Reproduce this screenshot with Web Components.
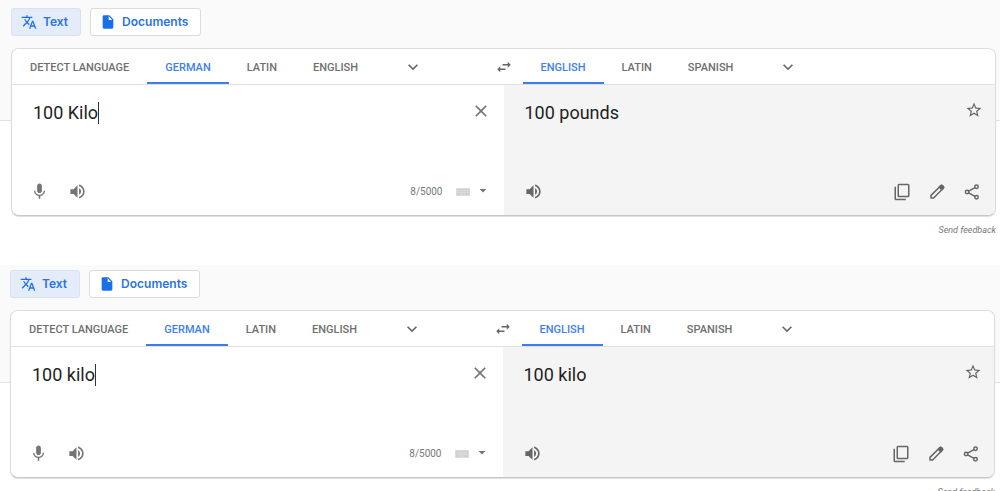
<!DOCTYPE html>
<html lang="en">
<head>
<meta charset="utf-8">
<title>Translate</title>
<style>
body{margin:0;background:#fff;font-family:Roboto,"Liberation Sans",sans-serif;color:#757575;overflow:hidden}
</style>
</head>
<body>
<translate-view source="100 Kilo" result="100 pounds"></translate-view>
<translate-view source="100 kilo" result="100 kilo" class="compact"></translate-view>
<script>
const ICONS = {
  translate:'<path d="M12.87 15.07l-2.54-2.51.03-.03c1.74-1.94 2.98-4.17 3.71-6.53H17V4h-7V2H8v2H1v1.99h11.17C11.5 7.92 10.44 9.75 9 11.35 8.07 10.32 7.3 9.19 6.69 8h-2c.73 1.63 1.73 3.17 2.98 4.56l-5.09 5.02L4 19l5-5 3.11 3.11.76-2.04zM18.5 10h-2L12 22h2l1.12-3h4.75L21 22h2l-4.5-12zm-2.62 7l1.62-4.33L19.12 17h-3.24z"/>',
  file:'<path fill-rule="evenodd" d="M6 2c-1.100 0-2 .9-2 2v16c0 1.100.9 2 2 2h12c1.100 0 2-.9 2-2V8l-6-6H6zm7 7V3.500L18.500 9H13z"/>',
  expand:'<path d="M16.590 8.590L12 13.170 7.410 8.590 6 10l6 6 6-6z"/>',
  swap:'<path d="M6.990 11L3 15l3.990 4v-3H14v-2H6.990v-3zM21 9l-3.990-4v3H10v2h7.010v3L21 9z"/>',
  close:'<path d="M19 6.410L17.590 5 12 10.590 6.410 5 5 6.410 10.590 12 5 17.590 6.410 19 12 13.410 17.590 19 19 17.590 13.410 12z"/>',
  mic:'<path d="M12 14c1.660 0 3-1.340 3-3V5c0-1.660-1.340-3-3-3S9 3.340 9 5v6c0 1.660 1.340 3 3 3zm5.300-3c0 3-2.540 5.100-5.300 5.100S6.700 14 6.700 11H5c0 3.410 2.720 6.230 6 6.720V21h2v-3.280c3.280-.48 6-3.300 6-6.720h-1.700z"/>',
  volume:'<path d="M3 9v6h4l5 5V4L7 9H3zm13.500 3c0-1.770-1.020-3.290-2.500-4.030v8.050c1.480-.73 2.500-2.250 2.500-4.020zM14 3.230v2.060c2.890.86 5 3.540 5 6.710s-2.110 5.850-5 6.710v2.060c4.010-.91 7-4.490 7-8.770s-2.990-7.860-7-8.770z"/>',
  star:'<path d="M22 9.240l-7.190-.62L12 2 9.190 8.630 2 9.240l5.460 4.730L5.820 21 12 17.270 18.180 21l-1.630-7.030L22 9.240zM12 15.400l-3.760 2.270 1-4.280-3.320-2.880 4.380-.38L12 6.100l1.710 4.040 4.380.38-3.320 2.880 1 4.280L12 15.400z"/>',
  copy:'<g fill="none" stroke="currentColor" stroke-width="2"><rect x="7" y="2" width="14" height="16" rx="1"/><path d="M3 5v16q0 1 1 1h13"/></g>',
  edit:'<g fill="none" stroke="currentColor" stroke-width="2" stroke-linejoin="round"><path d="M4 20v-3.500L17.300 3.300q.9-.7 1.800 0l1.500 1.600q.8.900 0 1.800L7.500 20z"/><path d="M15 5.600L18.400 9l2-2.200q.9-1-.1-2l-1.300-1.300q-1-.8-1.900 0z" fill="currentColor"/></g>',
  share:'<g fill="none" stroke="currentColor" stroke-width="2"><circle cx="18" cy="5" r="2.300"/><circle cx="5.500" cy="12" r="2.300"/><circle cx="18" cy="19" r="2.300"/><path d="M7.500 10.900L16 6.100M7.500 13.100L16 17.900"/></g>',
  keyboard:'<path fill="#cfcfcf" d="M3 7h18v10H3z"/><path stroke="#e4e4e4" stroke-width="1.500" fill="none" stroke-dasharray="1.500 1" d="M5 10h14M5 12.500h14M8 15h8"/>',
  drop:'<path d="M7.500 8h9L12 12.500z"/>'
};

class UiIcon extends HTMLElement {
  connectedCallback(){
    this.attachShadow({mode:'open'}).innerHTML = `
      <style>:host{display:block;width:var(--icon-size,18px);height:var(--icon-size,18px)}svg{display:block;width:100%;height:100%;fill:currentColor}</style>
      <svg viewBox="0 0 24 24" aria-hidden="true">${ICONS[this.getAttribute('name')]}</svg>`;
  }
}
customElements.define('ui-icon', UiIcon);

class IconButton extends HTMLElement {
  connectedCallback(){
    this.attachShadow({mode:'open'}).innerHTML = `
      <style>
        :host{display:block}
        button{display:grid;place-items:center;width:100%;padding:0;border:0;background:none;color:inherit;cursor:pointer}
      </style>
      <button type="button" aria-label="${this.getAttribute('label')}"><ui-icon name="${this.getAttribute('icon')}"></ui-icon></button>`;
  }
}
customElements.define('icon-button', IconButton);

class ModeButton extends HTMLElement {
  connectedCallback(){
    this.attachShadow({mode:'open'}).innerHTML = `
      <style>
        :host{display:block;--icon-size:16px}
        button{box-sizing:border-box;display:flex;align-items:center;gap:6px;height:28px;padding:0 12px 0 9px;border:1px solid #dadce0;border-radius:3px;background:#fff;color:#2a73e0;font:600 12px/16px Inter,Roboto,sans-serif;cursor:pointer}
        :host([active]) button{background:#e4ecfa;border-color:#d8e2f3}
        ui-icon{color:#1a6fe8}
      </style>
      <button type="button"><ui-icon name="${this.getAttribute('icon')}"></ui-icon><slot></slot></button>`;
  }
}
customElements.define('mode-button', ModeButton);

class LanguageTab extends HTMLElement {
  connectedCallback(){
    this.attachShadow({mode:'open'}).innerHTML = `
      <style>
        :host{display:block}
        button{box-sizing:border-box;height:100%;padding:4px 18px 0;border:0;border-bottom:2px solid transparent;background:none;color:#6f6f6f;font:500 11px/16px Roboto,sans-serif;white-space:nowrap;cursor:pointer}
        :host([active]) button{color:#4080ee;border-color:#3b7de9}
      </style>
      <button type="button"><slot></slot></button>`;
  }
}
customElements.define('language-tab', LanguageTab);

class LanguageBar extends HTMLElement {
  connectedCallback(){
    this.attachShadow({mode:'open'}).innerHTML = `
      <style>
        :host{display:grid;grid-template-columns:1fr 38px 1fr;height:35px;border-bottom:1px solid #e0e0e0;background:#fff;border-radius:7px 7px 0 0}
        nav{display:flex;align-items:stretch;min-width:0}
        icon-button{align-self:center;color:#666}
        nav icon-button{width:74px;--icon-size:20px}
      </style>
      <nav aria-label="Source language">
        <language-tab>DETECT LANGUAGE</language-tab><language-tab active>GERMAN</language-tab><language-tab>LATIN</language-tab><language-tab>ENGLISH</language-tab>
        <icon-button icon="expand" label="More source languages"></icon-button>
      </nav>
      <icon-button icon="swap" label="Swap languages"></icon-button>
      <nav aria-label="Target language">
        <language-tab active>ENGLISH</language-tab><language-tab>LATIN</language-tab><language-tab>SPANISH</language-tab>
        <icon-button icon="expand" label="More target languages"></icon-button>
      </nav>`;
  }
}
customElements.define('language-bar', LanguageBar);

class SourcePane extends HTMLElement {
  connectedCallback(){
    this.attachShadow({mode:'open'}).innerHTML = `
      <style>
        :host{display:flex;flex-direction:column;justify-content:space-between;min-width:0}
        .row{display:flex;align-items:center}
        .entry{padding:16px 13px 0 21px;height:24px}
        textarea{field-sizing:content;resize:none;overflow:hidden;border:0;outline:0;margin:0;padding:0;height:24px;background:none;color:#222;font:400 18px/24px Roboto,sans-serif;white-space:pre}
        .caret{width:1px;height:22px;background:#333}
        .entry icon-button{margin-left:auto;align-self:flex-start;--icon-size:20px}
        .tools{padding:0 12px 14px 18px;gap:19px}
        .tools > icon-button{--icon-size:19px}
        .count{margin-left:auto;font-size:10px;line-height:16px;color:#777}
        .keys{display:flex;margin-left:-8px;gap:2px}
      </style>
      <div class="row entry"><textarea rows="1" aria-label="Source text" spellcheck="false">${this.getAttribute('text')}</textarea><span class="caret"></span><icon-button icon="close" label="Clear source text"></icon-button></div>
      <div class="row tools">
        <icon-button icon="mic" label="Translate by voice"></icon-button>
        <icon-button icon="volume" label="Listen"></icon-button>
        <span class="count">8/5000</span>
        <span class="keys"><icon-button icon="keyboard" label="Keyboard"></icon-button><icon-button icon="drop" label="Input tools"></icon-button></span>
      </div>`;
  }
}
customElements.define('source-pane', SourcePane);

class ResultPane extends HTMLElement {
  connectedCallback(){
    this.attachShadow({mode:'open'}).innerHTML = `
      <style>
        :host{display:flex;flex-direction:column;justify-content:space-between;min-width:0;background:#f4f4f4;border-radius:0 0 7px 0}
        .row{display:flex;align-items:center;justify-content:space-between}
        .entry{padding:16px 12px 0 21px;height:24px;color:#222;font-size:18px;line-height:24px}
        .entry icon-button{align-self:flex-start}
        .tools{padding:0 14px 14px 20px}
        .tools > icon-button{--icon-size:19px}
        .actions{display:flex;gap:17px}
        icon-button{color:#666}
      </style>
      <div class="row entry"><span><slot></slot></span><icon-button icon="star" label="Save translation"></icon-button></div>
      <div class="row tools">
        <icon-button icon="volume" label="Listen to translation"></icon-button>
        <span class="actions"><icon-button icon="copy" label="Copy"></icon-button><icon-button icon="edit" label="Suggest an edit"></icon-button><icon-button icon="share" label="Share"></icon-button></span>
      </div>`;
  }
}
customElements.define('result-pane', ResultPane);

class TranslateView extends HTMLElement {
  connectedCallback(){
    this.attachShadow({mode:'open'}).innerHTML = `
      <style>
        :host{display:block;padding:8px 4px 29px 11px;background:linear-gradient(#e2e2e2,#e2e2e2) 0 120px/100% 1px no-repeat,linear-gradient(#fafafa,#fafafa) 0 0/100% 120px no-repeat}
        :host(.compact){padding:5px 5px 0 10px;background-position:0 117px,0 -3px}
        .modes{display:flex;gap:9px;margin-bottom:12px}
        .card{border:1px solid #dcdcdc;border-bottom-color:#c8c8c8;border-radius:8px;background:#fff;box-shadow:0 1px 1px #0002}
        .panes{display:grid;grid-template-columns:1fr 1fr;min-height:130px}
        .feedback{margin:8px 0 0;text-align:right;font-size:9px;line-height:12px;font-style:italic}
        a{color:#777;text-decoration:none}
      </style>
      <div class="modes"><mode-button icon="translate" active>Text</mode-button><mode-button icon="file">Documents</mode-button></div>
      <div class="card">
        <language-bar></language-bar>
        <div class="panes"><source-pane text="${this.getAttribute('source')}"></source-pane><result-pane>${this.getAttribute('result')}</result-pane></div>
      </div>
      <p class="feedback"><a href="#feedback">Send feedback</a></p>`;
  }
}
customElements.define('translate-view', TranslateView);
</script>
</body>
</html>
